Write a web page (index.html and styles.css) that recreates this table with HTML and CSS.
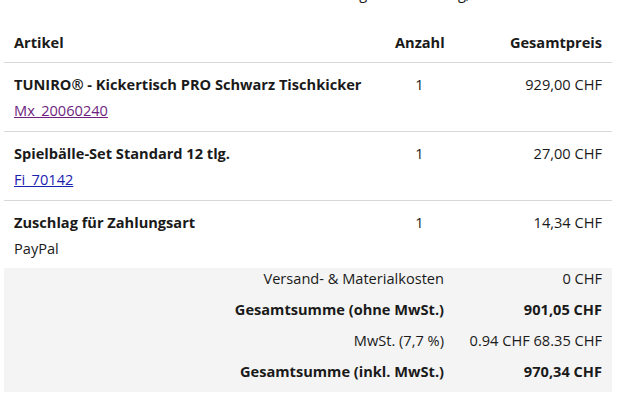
FILE: index.html
```html
<!DOCTYPE html>
<html lang="de">
<head>
<meta charset="utf-8">
<title>Bestellung</title>
<link rel="stylesheet" href="styles.css">
</head>
<body>
<p class="intro">Hier finden Sie die Übersicht zu Ihrer Bestellung und Lieferung,</p>
<table class="order">
  <colgroup>
    <col class="c-item">
    <col class="c-qty">
    <col class="c-price">
  </colgroup>
  <thead>
    <tr>
      <th class="item">Artikel</th>
      <th class="qty">Anzahl</th>
      <th class="price">Gesamtpreis</th>
    </tr>
  </thead>
  <tbody class="items">
    <tr>
      <td class="item"><strong>TUNIRO® - Kickertisch PRO Schwarz Tischkicker</strong><br><a class="visited" href="#">Mx_20060240</a></td>
      <td class="qty">1</td>
      <td class="price">929,00 CHF</td>
    </tr>
    <tr>
      <td class="item"><strong>Spielbälle-Set Standard 12 tlg.</strong><br><a class="link" href="#">Fi_70142</a></td>
      <td class="qty">1</td>
      <td class="price">27,00 CHF</td>
    </tr>
    <tr class="last">
      <td class="item"><strong>Zuschlag für Zahlungsart</strong><br>PayPal</td>
      <td class="qty">1</td>
      <td class="price">14,34 CHF</td>
    </tr>
  </tbody>
  <tbody class="summary">
    <tr>
      <td class="label" colspan="2">Versand- &amp; Materialkosten</td>
      <td class="price">0 CHF</td>
    </tr>
    <tr class="bold">
      <td class="label" colspan="2">Gesamtsumme (ohne MwSt.)</td>
      <td class="price">901,05 CHF</td>
    </tr>
    <tr>
      <td class="label" colspan="2">MwSt. (7,7 %)</td>
      <td class="price">0.94 CHF 68.35 CHF</td>
    </tr>
    <tr class="bold">
      <td class="label" colspan="2">Gesamtsumme (inkl. MwSt.)</td>
      <td class="price">970,34 CHF</td>
    </tr>
  </tbody>
</table>
</body>
</html>
```

FILE: styles.css
```css
html, body {
  margin: 0;
  padding: 0;
  background: #ffffff;
}

body {
  font-family: "Open Sans", "DejaVu Sans", sans-serif;
  font-size: 14.6px;
  color: #1a1a1a;
  overflow: hidden;
}

.intro {
  margin: -17px 0 17px 0;
  height: 21px;
  line-height: 21px;
  padding-left: 42px;
  white-space: nowrap;
}

.order {
  margin: 0 0 0 4px;
  width: 608px;
  border-collapse: collapse;
  table-layout: fixed;
}

.c-item { width: 381px; }
.c-qty { width: 69px; }
.c-price { width: 158px; }

.order th,
.order td {
  padding: 0 10px;
  vertical-align: top;
}

.order thead th {
  font-weight: 700;
  line-height: 21px;
  padding-top: 11px;
  padding-bottom: 9px;
  border-bottom: 1px solid #d8d8d8;
}

.item { text-align: left; }
.qty { text-align: center; }
.price { text-align: right; }

.items td {
  line-height: 26px;
  padding-top: 8px;
  padding-bottom: 8px;
  border-bottom: 1px solid #d8d8d8;
}

.items tr.last td {
  border-bottom: none;
  padding-bottom: 7px;
}

.items strong {
  font-weight: 700;
}

.visited { color: #6e1f80; }
.link { color: #1c22b0; }

.summary td {
  background: #f4f4f4;
  line-height: 21px;
  padding-bottom: 10px;
  text-align: right;
}

.summary tr.bold td {
  font-weight: 700;
}
```
